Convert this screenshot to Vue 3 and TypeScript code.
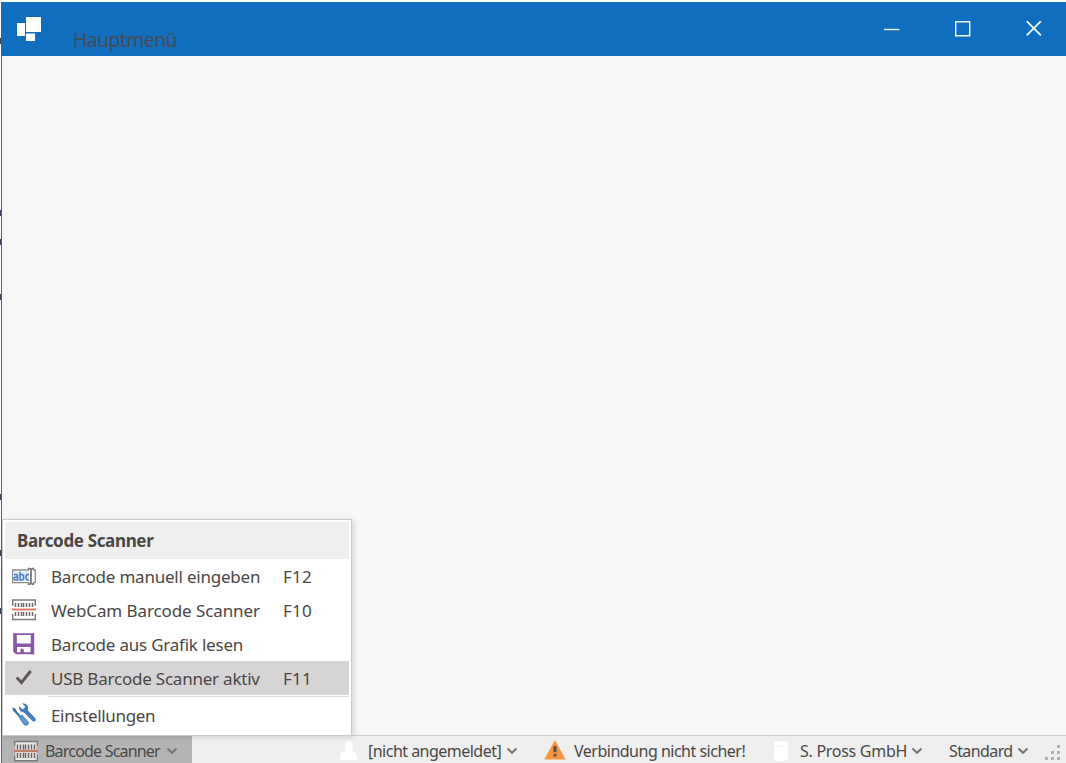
<script setup lang="ts">
interface MenuItem {
  label: string
  shortcut: string
  icon: 'text' | 'scan' | 'save' | 'check' | 'tools'
}

const items: MenuItem[] = [
  { label: 'Barcode manuell eingeben', shortcut: 'F12', icon: 'text' },
  { label: 'WebCam Barcode Scanner', shortcut: 'F10', icon: 'scan' },
  { label: 'Barcode aus Grafik lesen', shortcut: '', icon: 'save' },
  { label: 'USB Barcode Scanner aktiv', shortcut: 'F11', icon: 'check' },
  { label: 'Einstellungen', shortcut: '', icon: 'tools' },
]

const bars: number[] = [3, 6, 9, 11, 14, 17, 20]
const specks: number[] = [38, 210, 239, 294, 494, 550, 608]
</script>

<template>
  <div class="screen">
    <i v-for="y in specks" :key="y" class="speck" :style="{ top: y + 'px' }"></i>
    <div class="window">
      <header class="titlebar">
        <svg class="logo" width="26" height="26" viewBox="0 0 26 26">
          <path d="M0 6h8v13H0zM9 0h15v15H9zM9 16.500h9V24H9z" fill="#fff" />
        </svg>
        <h1 class="title">Hauptmenü</h1>
        <div class="controls">
          <svg width="16" height="16" viewBox="0 0 16 16"><path d="M0 8.500h15.500" /></svg>
          <svg width="16" height="16" viewBox="0 0 16 16"><path d="M.7.700h14v14H.7z" /></svg>
          <svg width="16" height="16" viewBox="0 0 16 16"><path stroke-width="1.800" d="M.7.200l14.200 14.200M14.900.200L.7 14.400" /></svg>
        </div>
      </header>

      <main class="content"></main>

      <footer class="status">
        <div class="scanner">
          <svg class="scan-icon" width="24" height="22" viewBox="0 0 24 22">
            <path d="M.7 6V1.500h22.600V6M.7 15v5.800h22.600V15" fill="#e9e7e6" stroke="#7c7877" stroke-width="1.400" />
            <path d="M1.400 5h21.200v12H1.400z" fill="#e9e7e6" />
            <path v-for="x in bars" :key="x" :d="`M${x + .5} 4.500v5M${x + .5} 13v5`" stroke="#656160" stroke-width="1.400" />
            <path d="M0 11h24" stroke="#c57e66" stroke-width="2.400" />
          </svg>
          <span class="t-scanner">Barcode Scanner</span>
          <svg class="chev" width="12" height="8" viewBox="0 0 12 8"><path d="M1.500 1.500L6 5.800l4.500-4.300" /></svg>
        </div>
        <div class="user">
          <svg width="18" height="20" viewBox="0 0 18 20">
            <path d="M9 0C5.500 0 4.300 3 5 6c.3 1.500.8 2.500 1.500 3.200L1.500 11.500Q0 12.500 0 15v4h17v-4q0-2.500-1.500-3.500L11 9.200c1-.9 1.700-2 2-4C13.300 2 12 0 9 0z" fill="#fff" />
          </svg>
          <span class="t-user">[nicht angemeldet]</span>
          <svg class="chev" width="12" height="8" viewBox="0 0 12 8"><path d="M1.500 1.500L6 5.800l4.500-4.300" /></svg>
        </div>
        <div class="warn">
          <svg class="warn-icon" width="22" height="20" viewBox="0 0 22 20">
            <path d="M11 0L21.700 19.500H.3z" fill="#f8943f" />
            <path d="M11 6v6.200M11 14v2.600" stroke="#56504b" stroke-width="3" />
          </svg>
          <span class="t-warn">Verbindung nicht sicher!</span>
        </div>
        <div class="firm">
          <svg width="14" height="20" viewBox="0 0 14 20">
            <path d="M0 3q0-3 7-3t7 3v14q0 3-7 3t-7-3z" fill="#fff" />
            <path d="M.5 4.500q6.500 1.500 13 0" fill="none" stroke="#f0f0f0" stroke-width=".8" />
          </svg>
          <span class="t-firm">S. Pross GmbH</span>
          <svg class="chev" width="12" height="8" viewBox="0 0 12 8"><path d="M1.500 1.500L6 5.800l4.500-4.300" /></svg>
        </div>
        <div class="profile">
          <span class="t-profile">Standard</span>
          <svg class="chev" width="12" height="8" viewBox="0 0 12 8"><path d="M1.500 1.500L6 5.800l4.500-4.300" /></svg>
        </div>
        <svg class="grip" width="16" height="16" viewBox="0 0 16 16">
          <path d="M12 0h3v3h-3zM6 6h3v3H6zM12 6h3v3h-3zM0 12h3v3H0zM6 12h3v3H6zM12 12h3v3h-3z" fill="#b0b0b0" />
        </svg>
      </footer>
    </div>

    <nav class="menu">
      <h2 class="menu-head"><span>Barcode Scanner</span></h2>
      <div v-for="(item, i) in items" :key="item.label" class="item" :class="item.icon">
        <svg width="24" height="24" viewBox="0 0 24 24">
          <g v-if="item.icon === 'text'">
            <path d="M17 6H.7v12.700H17M21 6h2.300v12.700H21" fill="none" stroke="#8f8c8a" stroke-width="1.300" />
            <path d="M1.400 7.500H17v10H1.400z" fill="#dce9f6" />
            <path d="M2 10.500h2.500q1 0 1 1.200v4.300H3.200q-1.300 0-1.300-1.400t1.300-1.400h2.300M8 7.500V16h1.700q2 0 2-2.800t-2-2.800H8M17 10.500h-1q-2 0-2 2.700t2 2.700h1" fill="none" stroke="#4680c2" stroke-width="1.500" />
            <path d="M15.800 4.500h1.700l1.500 1.200 1.500-1.200h1.700M19 5v14.500M15.800 20.200h1.700l1.500-1.200 1.500 1.200h1.700" fill="none" stroke="#757170" stroke-width="1.700" />
          </g>
          <g v-else-if="item.icon === 'scan'">
            <path d="M.7 8V2h22.600v6M.7 16v5.500h22.600V16" fill="none" stroke="#7f7b79" stroke-width="1.400" />
            <path v-for="x in bars" :key="x" :d="`M${x + .5} 5v4M${x + .5} 14v4`" stroke="#6d6967" stroke-width="1.500" />
            <path d="M0 11.500h24" stroke="#e37358" stroke-width="1.900" />
          </g>
          <path v-else-if="item.icon === 'save'" fill-rule="evenodd" d="M1.200 1.200h21v21H4l-2.800-2.600zM4.800 3v8.500h14V3zM5 15v5.300h3.500v-3.500h3.200v3.500h6.800V15z" fill="#8a58a9" />
          <path v-else-if="item.icon === 'check'" d="M4.700 11.500l4.800 5L18.700 5" fill="none" stroke="#5b5857" stroke-width="2.900" />
          <g v-else>
            <path d="M13 7.500l8.800 9" stroke="#467fbe" stroke-width="4" stroke-linecap="round" />
            <path d="M10 .200L13 3.500l-.7 2-2.200.6L7 3c-.6 4 2.200 7 6 6.200L16 6.500C17 3 14 0 10 .200z" fill="#467fbe" />
            <path d="M.2 4.500l3 1.100 2.300 3.600 4 4.500-1.500 1.200-4.200-4.500L1.300 8z" fill="#386fae" />
            <path d="M6.800 14.800q.5-2.600 3.600-3l5.800 6.500q1.300 2.500-.6 4-2.300 1.200-4.200-1z" fill="#4f89c7" />
            <path d="M9.300 14.800l5 5.500M11.200 13.300l4.500 5.200" stroke="#a9c9e8" stroke-width=".8" />
          </g>
        </svg>
        <span class="label" :class="'m' + i">{{ item.label }}</span>
        <span class="key">{{ item.shortcut }}</span>
      </div>
    </nav>
  </div>
</template>

<style>
body { background: #fff; overflow: hidden; }
</style>

<style scoped>
.screen {
  position: relative;
  box-sizing: border-box;
  width: 1066px;
  height: 763px;
  padding: 2px 0 0 1px;
  overflow: hidden;
  background: #fdfdfd;
  font-family: "Noto Sans", "Open Sans", sans-serif;
  color: #4a4746;
  white-space: nowrap;
}
.speck { position: absolute; left: 0; width: 1px; height: 6px; background: #36445f; }
.window { display: flex; flex-direction: column; height: 761px; box-sizing: border-box; border-left: 1px solid #1674b0; }
.titlebar { display: flex; flex: none; height: 54px; margin-left: -1px; padding-left: 16px; background: #106ebe; }
.logo { margin-top: 15px; flex: none; }
.title { margin: 25px 0 0 30px; font-size: 19.500px; line-height: 26px; font-weight: 400; letter-spacing: -.65px; color: #484a52; }
.controls { display: flex; gap: 55px; margin: 18.500px 24.500px 0 auto; }
.controls svg { fill: none; stroke: #f4fbff; stroke-width: 1.400; }
.content { flex: 1; background: #f7f7f7; }
.status { position: relative; display: flex; flex: none; height: 28px; box-sizing: border-box; border-top: 1px solid #cdcdcd; background: #efefef; font-size: 16px; line-height: 29px; }
.status > div { display: flex; flex: none; align-items: center; height: 29px; }
.status svg { flex: none; }
.status span { flex: none; padding-top: 2px; }
.chev { fill: none; stroke: #777473; stroke-width: 2; }
.scanner { width: 190px; background: #b5b4b4; }
.scan-icon { margin-left: 12px; }
.status .t-scanner { width: 117px; margin: 0 4px 0 7px; letter-spacing: -.8px; }
.user { width: 204px; margin-left: 148px; }
.status .t-user { width: 133px; margin: 0 5px 0 10px; letter-spacing: -.52px; }
.warn { width: 230px; }
.warn-icon { margin-top: -2px; }
.status .t-warn { margin-left: 8px; letter-spacing: -.5px; }
.firm { width: 175px; }
.status .t-firm { width: 107px; margin: 0 4px 0 12px; letter-spacing: -.28px; }
.status .t-profile { width: 64px; margin-right: 4px; letter-spacing: -.6px; }
.grip { margin: 9px 0 0 16px; }
.menu { position: absolute; left: 2px; top: 519px; width: 350px; height: 217px; box-sizing: border-box; border: 1px solid #cbcbcb; padding: 2px; background: #fff; box-shadow: 2px 1px 5px #0002; font-size: 17px; }
.menu-head { margin: 0; height: 37px; padding-left: 12px; background: #efefef; font-size: 17px; line-height: 38px; font-weight: 700; letter-spacing: -.35px; }
.item { display: flex; align-items: center; height: 34px; padding-left: 7px; }
.item svg { flex: none; }
.item .label { width: 217px; margin: 0 15px; letter-spacing: -.22px; }
.item .m1 { letter-spacing: -.09px; }
.item .m4 { letter-spacing: -.33px; }
.key { letter-spacing: .2px; }
.check { background: #d6d4d4; }
.tools { position: relative; margin-top: 3px; }
.tools::before { content: ""; position: absolute; left: 43px; right: 0; top: -2px; height: 1px; background: #dedede; }
</style>
